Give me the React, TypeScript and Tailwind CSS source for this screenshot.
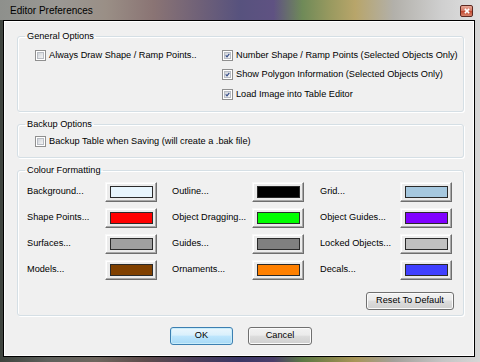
import type { ReactNode } from 'react'

const swatches: [string, string][][] = [
  [['Background...', '#e8f5fd'], ['Outline...', '#000000'], ['Grid...', '#a6c8df']],
  [['Shape Points...', '#ff0000'], ['Object Dragging...', '#00ff00'], ['Object Guides...', '#8000ff']],
  [['Surfaces...', '#a0a0a0'], ['Guides...', '#808080'], ['Locked Objects...', '#c0c0c0']],
  [['Models...', '#804000'], ['Ornaments...', '#ff8000'], ['Decals...', '#4040ff']],
]

function CheckBox({ checked, label }: { checked?: boolean; label: string }) {
  return (
    <div className="flex items-center gap-[3px] h-[13px]">
      <div className="w-[11px] h-[11px] border border-[#8f8f8f] bg-white p-[1px] shrink-0">
        <div className="w-full h-full border border-[#b8bcc3] bg-[linear-gradient(135deg,#cfd3d9,#f4f4f4)] relative">
          {checked && (
            <svg viewBox="0 0 7 7" className="absolute inset-0 w-full h-full">
              <path d="M1 3.4 L2.8 5.4 L6 1.2" fill="none" stroke="#2f4785" strokeWidth="1.5" />
            </svg>
          )}
        </div>
      </div>
      <span className="whitespace-nowrap">{label}</span>
    </div>
  )
}

function Group({ title, className, children }: { title: string; className?: string; children: ReactNode }) {
  return (
    <fieldset className={`border border-[#d5dfe5] rounded-[3px] shadow-[inset_1px_1px_0_#fff,1px_1px_0_#fff] ${className ?? ''}`}>
      <legend className="ml-[7px] px-[2px] leading-[12px]">{title}</legend>
      {children}
    </fieldset>
  )
}

function Swatch({ color }: { color: string }) {
  return (
    <div className="w-[52px] h-[20px] border border-t-[#f8f8f8] border-l-[#f8f8f8] border-r-[#6e6e6e] border-b-[#6e6e6e] bg-[#ececec] shadow-[inset_-1px_-1px_0_#a8a8a8,inset_1px_1px_0_#fff] flex items-center justify-center">
      <div className="w-[43px] h-[12px] border border-[#2a2a2a]" style={{ backgroundColor: color }} />
    </div>
  )
}

function VistaButton({ label, width, primary }: { label: string; width: string; primary?: boolean }) {
  const look = primary
    ? 'border-[#3c7fb1] bg-[linear-gradient(#eaf6fd_0%,#d9f0fc_45%,#bee6fd_50%,#a7d9f5_100%)] shadow-[inset_0_0_0_1px_#c8ecfa]'
    : 'border-[#707070] bg-[linear-gradient(#f2f2f2_0%,#ebebeb_45%,#dddddd_50%,#cfcfcf_100%)] shadow-[inset_0_0_0_1px_#fbfbfb]'
  return (
    <div className={`${width} h-[18px] rounded-[3px] border flex items-center justify-center ${look}`}>
      {label}
    </div>
  )
}

export default function App() {
  return (
    <div className="w-[480px] h-[362px] flex flex-col font-['Liberation_Sans',Arial,sans-serif] text-[9.2px] text-black bg-[linear-gradient(90deg,#3e443e_0%,#5e605c_10%,#6e665e_20%,#5e4c4c_30%,#4b3e58_40%,#3b3766_50%,#4a3e6a_57%,#5b7844_63%,#86864c_69%,#a89558_74%,#a3a09a_82%,#c4c4c4_92%,#d6d6d6_100%)]">
      {/* title bar */}
      <div className="h-[20px] flex items-start pl-[10px] pr-[7px] shrink-0 bg-[linear-gradient(90deg,#8e908c_0%,#9a9894_12%,#9a8f86_22%,#8a7474_32%,#6e6078_42%,#57527e_50%,#5f5282_57%,#6f8a58_63%,#9a9a60_69%,#b8a56a_74%,#b2b0aa_82%,#cfcfcf_92%,#e0e0e0_100%)]">
        <span className="text-[10px] leading-[20px] mt-[1px] text-black">Editor Preferences</span>
        <div className="flex-1" />
        <div className="mt-[5px] w-[13px] h-[12px] rounded-[2px] border border-[#5e2a22] bg-[linear-gradient(#e8a898_0%,#d57a66_45%,#c24a32_55%,#d8826a_100%)] flex items-center justify-center">
          <svg viewBox="0 0 7 7" className="w-[6px] h-[6px]">
            <path d="M1 1 L6 6 M6 1 L1 6" stroke="#fff" strokeWidth="1.8" />
          </svg>
        </div>
      </div>

      {/* client area */}
      <div className="ml-[3px] mr-[5px] h-[337px] border border-black shrink-0">
        <div className="h-full border border-white bg-[#f0f0f0] pt-[8px] pl-[12px] pr-[9px] flex flex-col">
          <Group title="General Options" className="pb-[10px]">
            <div className="flex pl-[17px] pt-[7px]">
              <div className="w-[187px]">
                <CheckBox label="Always Draw Shape / Ramp Points.." />
              </div>
              <div className="flex flex-col">
                <CheckBox checked label="Number Shape / Ramp Points (Selected Objects Only)" />
                <div className="mt-[6px]">
                  <CheckBox checked label="Show Polygon Information (Selected Objects Only)" />
                </div>
                <div className="mt-[7px]">
                  <CheckBox checked label="Load Image into Table Editor" />
                </div>
              </div>
            </div>
          </Group>

          <Group title="Backup Options" className="mt-[6px] pb-[9px]">
            <div className="pl-[17px] pt-[5px]">
              <CheckBox label="Backup Table when Saving (will create a .bak file)" />
            </div>
          </Group>

          <Group title="Colour Formatting" className="mt-[6px] pb-[5px]">
            <div className="pl-[9px] pt-[6px] flex flex-col gap-[6px]">
              {swatches.map((row, i) => (
                <div key={i} className="flex items-center h-[20px]">
                  {row.map(([label, color], j) => (
                    <div key={label} className="flex items-center">
                      <span className={j === 0 ? 'w-[78px]' : j === 1 ? 'w-[95px] pl-[15px]' : 'w-[96px] pl-[16px]'}>
                        {label}
                      </span>
                      <Swatch color={color} />
                    </div>
                  ))}
                </div>
              ))}
            </div>
            <div className="flex justify-end pr-[9px] mt-[12px]">
              <VistaButton label="Reset To Default" width="w-[88px]" />
            </div>
          </Group>

          <div className="flex gap-[15px] pl-[153px] mt-[11px]">
            <VistaButton label="OK" width="w-[63px]" primary />
            <VistaButton label="Cancel" width="w-[64px]" />
          </div>
        </div>
      </div>
    </div>
  )
}
